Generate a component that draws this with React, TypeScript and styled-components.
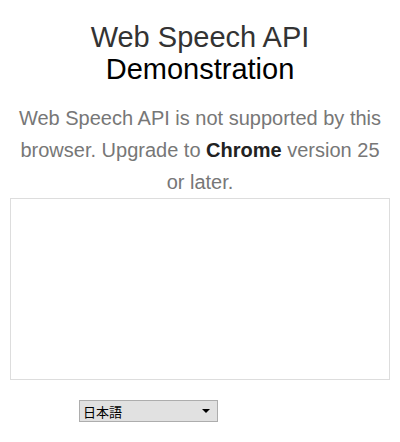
import React from "react";
import styled, { createGlobalStyle } from "styled-components";

const Global = createGlobalStyle`
  html, body { margin: 0; padding: 0; background: #fff; }
  body { font-family: "Liberation Sans", Arial, sans-serif; }
`;

const Page = styled.div`
  padding: 21px 10px 20px;
  display: flex;
  flex-direction: column;
`;

const Headline = styled.h1`
  margin: 0;
  font-size: 29px;
  font-weight: normal;
  line-height: 32px;
  text-align: center;
  color: #000;
`;

const HeadLink = styled.span`
  display: block;
  color: #333;
`;

const Info = styled.p`
  margin: 17px 0 0;
  font-size: 20px;
  line-height: 32px;
  text-align: center;
  color: #777;
`;

const Strong = styled.b`
  color: #222;
`;

const Results = styled.div`
  border: 1px solid #ddd;
  padding: 15px;
  min-height: 150px;
  font-size: 14px;
  font-weight: bold;
  text-align: left;
`;

const SelectRow = styled.div`
  margin-top: 20px;
  padding-left: 69px;
  display: flex;
`;

const SelectWrap = styled.div`
  position: relative;
  width: 139px;
  height: 22px;
  &::after {
    content: "";
    position: absolute;
    right: 8px;
    top: 9px;
    border-left: 4px solid transparent;
    border-right: 4px solid transparent;
    border-top: 4px solid #000;
    pointer-events: none;
  }
`;

const Select = styled.select`
  appearance: none;
  width: 100%;
  height: 100%;
  box-sizing: border-box;
  margin: 0;
  padding: 0 0 0 3px;
  border: 1px solid #adadad;
  border-radius: 0;
  background: #e1e1e1;
  color: #000;
  font-family: "Noto Sans CJK JP", sans-serif;
  font-size: 13px;
  outline: none;
`;

export default function App() {
  return (
    <>
      <Global />
      <Page>
        <Headline>
          <HeadLink>Web Speech API</HeadLink>
          Demonstration
        </Headline>
        <Info>
          Web Speech API is not supported by this browser. Upgrade to <Strong>Chrome</Strong> version 25 or later.
        </Info>
        <Results />
        <SelectRow>
          <SelectWrap>
            <Select defaultValue="ja">
              <option value="ja">日本語</option>
              <option value="en">English</option>
            </Select>
          </SelectWrap>
        </SelectRow>
      </Page>
    </>
  );
}
